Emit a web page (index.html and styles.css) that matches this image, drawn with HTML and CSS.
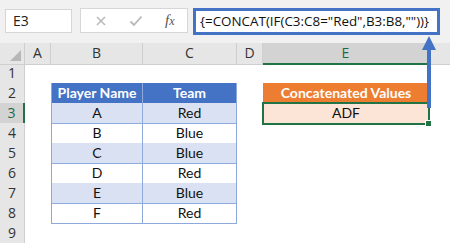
FILE: index.html
```html
<!DOCTYPE html>
<html>
<head>
<meta charset="utf-8">
<link rel="stylesheet" href="styles.css">
</head>
<body>
<div class="page">
  <div class="toolbar">
    <div class="namebox">E3</div>
    <div class="buttons">
      <svg class="btn" width="12" height="12" viewBox="0 0 12 12"><path d="M2 2 L10 10 M10 2 L2 10" stroke="#b8b8b8" stroke-width="1.5" fill="none"/></svg>
      <svg class="btn" width="14" height="12" viewBox="0 0 14 12"><path d="M1.5 6.5 L5 10 L12.5 1.5" stroke="#b8b8b8" stroke-width="1.8" fill="none"/></svg>
      <span class="fx">f<span class="x">x</span></span>
    </div>
    <div class="formula">{=CONCAT(IF(C3:C8="Red",B3:B8,""))}</div>
  </div>
  <div class="sheet">
    <div class="row head">
      <div class="corner"><span class="tri"></span></div>
      <div class="ch">A</div>
      <div class="ch">B</div>
      <div class="ch">C</div>
      <div class="ch">D</div>
      <div class="ch sel">E</div>
      <div class="ch last"></div>
    </div>
    <div class="row"><div class="rh">1</div><div></div><div></div><div></div><div></div><div></div><div></div></div>
    <div class="row"><div class="rh">2</div><div></div><div class="t th first">Player Name</div><div class="t th">Team</div><div></div><div class="orange">Concatenated Values</div><div></div></div>
    <div class="row"><div class="rh selr">3</div><div></div><div class="t band first">A</div><div class="t band">Red</div><div></div><div class="result">ADF<span class="handle"></span></div><div></div></div>
    <div class="row"><div class="rh">4</div><div></div><div class="t first">B</div><div class="t">Blue</div><div></div><div></div><div></div></div>
    <div class="row"><div class="rh">5</div><div></div><div class="t band first">C</div><div class="t band">Blue</div><div></div><div></div><div></div></div>
    <div class="row"><div class="rh">6</div><div></div><div class="t first">D</div><div class="t">Red</div><div></div><div></div><div></div></div>
    <div class="row"><div class="rh">7</div><div></div><div class="t band first">E</div><div class="t band">Blue</div><div></div><div></div><div></div></div>
    <div class="row"><div class="rh">8</div><div></div><div class="t first">F</div><div class="t">Red</div><div></div><div></div><div></div></div>
    <div class="row"><div class="rh">9</div><div></div><div></div><div></div><div></div><div></div><div></div></div>
  </div>
  <svg class="arrow" width="20" height="75" viewBox="0 0 20 75"><path d="M9 14 V72 H13 V14 Z" fill="#4472c4"/><path d="M11 0 L18 14 L4 14 Z" fill="#4472c4"/></svg>
</div>
</body>
</html>
```
FILE: styles.css
```css
html, body {
  margin: 0;
  padding: 0;
  background: #fff;
}
.page {
  position: relative;
  width: 450px;
  height: 243px;
  overflow: hidden;
  font-family: "Open Sans", "Liberation Sans", sans-serif;
}
.toolbar {
  height: 43px;
  background: #f1f1f1;
  display: flex;
  align-items: flex-start;
  padding: 0 0 0 5px;
  box-sizing: border-box;
}
.namebox {
  margin-top: 9px;
  width: 67px;
  height: 24px;
  box-sizing: border-box;
  background: #fff;
  border: 1px solid #d6d6d6;
  font-size: 14px;
  line-height: 22px;
  padding-left: 7px;
  color: #222;
}
.buttons {
  margin-top: 8px;
  margin-left: 8px;
  width: 108px;
  height: 25px;
  box-sizing: border-box;
  background: #fff;
  border: 1px solid #d6d6d6;
  display: flex;
  align-items: center;
  padding-left: 14px;
}
.btn { display: block; }
.buttons .btn + .btn { margin-left: 22px; }
.fx {
  margin-left: 22px;
  font-family: "Liberation Serif", serif;
  font-style: italic;
  font-size: 15px;
  color: #555;
  line-height: 1;
}
.fx .x { font-size: 12px; }
.formula {
  margin-top: 8px;
  margin-left: 5px;
  width: 247px;
  height: 27px;
  box-sizing: border-box;
  border: 3px solid #4472c4;
  background: #fff;
  font-size: 13.4px;
  line-height: 21px;
  padding-left: 4px;
  color: #111;
  white-space: nowrap;
  overflow: hidden;
}
.sheet {
  display: flex;
  flex-direction: column;
}
.row {
  display: grid;
  grid-template-columns: 25px 26px 92px 94px 26px 166px 21px;
  height: 20px;
}
.row > div { box-sizing: border-box; }
.corner {
  background: #e6e6e6;
  border-right: 1px solid #cfcfcf;
  border-bottom: 1px solid #cfcfcf;
  position: relative;
}
.tri {
  position: absolute;
  right: 3px;
  bottom: 3px;
  width: 0;
  height: 0;
  border-left: 11px solid transparent;
  border-bottom: 11px solid #b7b7b7;
}
.ch {
  background: #e6e6e6;
  border-right: 1px solid #cfcfcf;
  border-bottom: 1px solid #cfcfcf;
  text-align: center;
  font-size: 14px;
  line-height: 20px;
  color: #333;
}
.ch.sel {
  background: #d3d3d3;
  color: #1e6b40;
  border-bottom: 2px solid #217346;
}
.ch.last { border-right: none; }
.rh {
  background: #e6e6e6;
  border-right: 1px solid #cfcfcf;
  border-bottom: 1px solid #d8d8d8;
  text-align: center;
  font-size: 14px;
  line-height: 20px;
  color: #333;
}
.rh.selr {
  background: #d3d3d3;
  color: #1e6b40;
  border-right: 2px solid #217346;
}
.t {
  font-family: "Lato", "Open Sans", sans-serif;
  font-size: 14px;
  text-align: center;
  line-height: 20px;
  color: #111;
  border-right: 1px solid #8ea9db;
  border-bottom: 1px solid #8ea9db;
}
.t.first { border-left: 1px solid #8ea9db; }
.th {
  background: #4472c4;
  color: #fff;
  font-weight: bold;
}
.band { background: #d9e1f2; }
.orange {
  background: #ed7d31;
  color: #fff;
  font-family: "Lato", "Open Sans", sans-serif;
  font-weight: bold;
  font-size: 14px;
  text-align: center;
  line-height: 20px;
}
.result {
  position: relative;
  background: #fce4d6;
  font-family: "Lato", "Open Sans", sans-serif;
  font-size: 14px;
  text-align: center;
  line-height: 20px;
  color: #111;
}
.result::after {
  content: "";
  position: absolute;
  left: -1px;
  top: -1px;
  right: -1px;
  bottom: -1px;
  border: 2px solid #217346;
}
.handle {
  position: absolute;
  right: -3px;
  bottom: -3px;
  width: 5px;
  height: 5px;
  background: #217346;
  border: 1px solid #fff;
  z-index: 2;
}
.arrow {
  position: absolute;
  left: 418px;
  top: 36px;
}
```
